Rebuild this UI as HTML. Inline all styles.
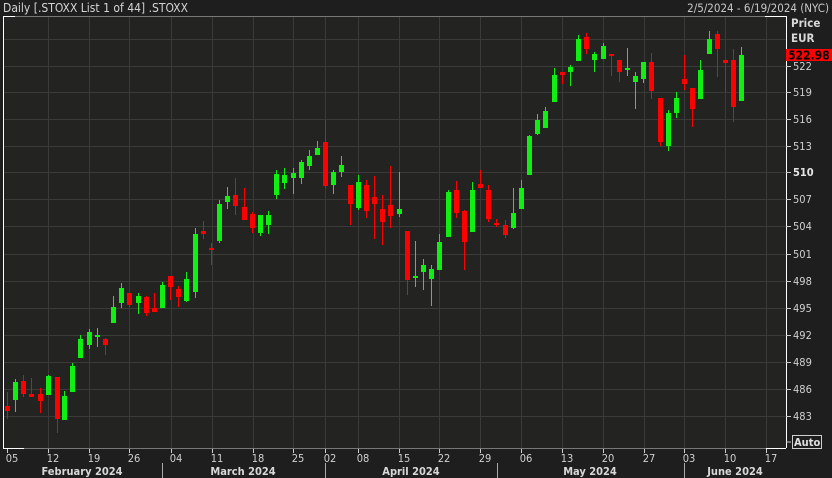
<!DOCTYPE html>
<html><head><meta charset="utf-8"><style>
html,body{margin:0;padding:0;background:#1e1e1e;width:832px;height:478px;overflow:hidden}
svg{display:block}
text{font-family:"DejaVu Sans Condensed","Liberation Sans",sans-serif}
</style></head><body>
<svg id="s" width="832" height="478" xmlns="http://www.w3.org/2000/svg">
<rect x="0" y="0" width="832" height="478" fill="#1e1e1e"/>
<rect x="3" y="16" width="783" height="432" fill="#232422"/>
<g id="grid" stroke="#3a3b39" stroke-width="1"></g>
<g id="c"></g>
<line x1="3.5" y1="16" x2="3.5" y2="448" stroke="#fff"/>
<line x1="786.5" y1="16" x2="786.5" y2="448" stroke="#fff"/>
<line x1="3" y1="16.5" x2="786" y2="16.5" stroke="#777"/>
<line x1="3" y1="16.5" x2="15" y2="16.5" stroke="#fff"/>
<line x1="765" y1="16.5" x2="786" y2="16.5" stroke="#fff"/>
<line x1="3" y1="448.5" x2="786" y2="448.5" stroke="#777"/>
<line x1="3" y1="448.5" x2="24" y2="448.5" stroke="#fff"/>
<line x1="766" y1="448.5" x2="786" y2="448.5" stroke="#fff"/>
<g id="ax" fill="#d0d0d0" font-size="11"></g>
<text x="3" y="12" fill="#d4d4d4" font-size="12">Daily [.STOXX List 1 of 44] .STOXX</text>
<text x="829" y="12" fill="#c8c8c8" font-size="11.5" text-anchor="end">2/5/2024 - 6/19/2024 (NYC)</text>
<text x="791" y="27" fill="#d8d8d8" font-size="11.5" font-weight="bold">Price</text>
<text x="791" y="42" fill="#d8d8d8" font-size="11.5" font-weight="bold">EUR</text>
<rect x="786" y="49" width="46" height="12" fill="#ff0000"/>
<text x="788" y="59.5" fill="#000" font-size="12" font-weight="bold">522.98</text>
<rect x="792.5" y="435.5" width="29" height="13" fill="none" stroke="#cfcfcf"/>
<text x="794" y="446" fill="#e0e0e0" font-size="11" font-weight="bold">Auto</text>
<line x1="786" y1="442" x2="791" y2="442" stroke="#ccc"/>
</svg>
<script>
var NS="http://www.w3.org/2000/svg";
function el(p,t,a,tx){var e=document.createElementNS(NS,t);for(var k in a)e.setAttribute(k,a[k]);if(tx)e.textContent=tx;p.appendChild(e);return e;}
var g=document.getElementById('grid'),ax=document.getElementById('ax'),c=document.getElementById('c');
var ys=[[39,''],[66,'522'],[92,'519'],[119,'516'],[146,'513'],[172,'510'],[199,'507'],[226,'504'],[254,'501'],[281,'498'],[308,'495'],[335,'492'],[362,'489'],[389,'486'],[416,'483']];
ys.forEach(function(v){el(g,'line',{x1:3,x2:786,y1:v[0]+.5,y2:v[0]+.5});if(v[1]){el(ax,'line',{x1:786,x2:791,y1:v[0]+.5,y2:v[0]+.5,stroke:'#ccc'});var t=el(ax,'text',{x:793,y:v[0]+4},v[1]);if(v[1]=='510'){t.setAttribute('font-weight','bold');t.setAttribute('fill','#e8e8e8');}}});
var xs=[[7,'05'],[48,'12'],[89,'19'],[129,'26'],[171,'04'],[212,'11'],[253,'18'],[293,'25'],[325,'02'],[358,'08'],[399,'15'],[439,'22'],[480,'29'],[521,'06'],[562,'13'],[603,'20'],[644,'27'],[684,'03'],[725,'10'],[766,'17']];
xs.forEach(function(v){if(v[0]>10)el(g,'line',{x1:v[0]+.5,x2:v[0]+.5,y1:17,y2:448});el(ax,'line',{x1:v[0]+.5,x2:v[0]+.5,y1:449,y2:453,stroke:'#ccc'});el(ax,'text',{x:v[0]+5,y:462,'text-anchor':'middle'},v[1]);});
[[162],[325],[497],[684]].forEach(function(v){el(ax,'line',{x1:v[0]+.5,x2:v[0]+.5,y1:463,y2:478,stroke:'#aaa'});});
[[82,'February 2024'],[243,'March 2024'],[411,'April 2024'],[590,'May 2024'],[735,'June 2024']].forEach(function(v){el(ax,'text',{x:v[0],y:475,'text-anchor':'middle','font-weight':'bold','fill':'#d8d8d8'},v[1]);});
// x, color, wickTop, bodyTop, bodyBot, wickBot
var d=[
[7,'r',392,406,411,419],[15,'g',379,382,400,412],[23,'r',375,381,394,397],[31,'r',378,394,397,397],[40,'r',388,394,401,413],[48,'g',375,376,395,395],[57,'r',377,377,419,433],[64,'g',391,396,420,420],[72,'g',363,366,392,392],[80,'g',335,339,358,358],
[89,'g',329,332,345,349],[97,'g',328,335,337,347],[105,'r',338,339,345,355],[113,'g',296,307,323,323],[121,'g',283,288,303,308],[129,'r',293,293,305,307],[138,'g',293,296,303,314],[146,'r',296,297,313,316],[154,'r',293,308,312,312],[162,'g',282,285,308,308],
[170,'r',276,276,287,300],[178,'r',286,289,297,307],[186,'g',272,279,301,302],[195,'g',228,234,292,298],[203,'r',221,231,234,239],[211,'r',243,248,250,265],[219,'g',200,204,241,243],[227,'g',187,196,202,209],[235,'r',178,195,206,215],[244,'r',188,207,220,220],
[252,'r',212,214,228,233],[260,'g',215,215,233,236],[268,'g',211,215,225,234],[276,'g',170,174,195,199],[284,'g',168,175,183,189],[293,'g',168,173,178,194],[301,'g',160,162,178,184],[309,'g',150,156,166,170],[317,'g',141,148,155,155],[325,'r',120,142,186,188],
[333,'g',170,172,185,194],[341,'g',156,165,172,177],[350,'r',185,185,204,225],[358,'g',175,182,208,210],[366,'r',180,185,211,218],[374,'r',176,197,204,239],[382,'r',195,209,222,245],[390,'r',166,205,216,228],[399,'g',172,209,214,217],[407,'r',231,231,280,295],
[415,'g',241,276,278,287],[423,'g',259,265,272,290],[431,'g',265,269,279,306],[439,'g',234,242,270,270],[448,'g',190,192,237,237],[456,'r',181,190,213,218],[464,'r',210,211,242,270],[472,'g',182,190,232,232],[480,'r',170,184,188,188],[488,'r',185,190,219,222],
[496,'r',219,223,225,227],[505,'r',220,225,235,238],[513,'g',188,213,228,229],[521,'g',180,188,209,209],[529,'g',135,136,175,175],[537,'g',114,120,134,135],[545,'g',107,111,128,128],[554,'g',68,75,102,102],[562,'r',72,72,75,84],[570,'g',65,67,72,86],
[578,'g',35,39,61,61],[586,'r',33,37,49,54],[594,'g',52,54,60,72],[603,'g',43,46,59,59],[611,'r',54,54,56,76],[619,'r',60,60,72,82],[627,'g',48,68,70,76],[635,'g',72,76,82,109],[643,'g',62,62,79,83],[651,'r',53,62,91,99],
[660,'r',98,98,142,146],[668,'g',110,113,146,151],[676,'g',92,98,113,118],[684,'r',55,79,84,90],[692,'r',88,88,109,127],[700,'g',60,70,99,99],[709,'g',31,39,54,54],[717,'r',31,34,49,77],[725,'r',60,60,63,92],[733,'r',49,60,107,122],[741,'g',47,55,101,101]
];
d.forEach(function(k){var col=k[1]=='g'?'#11ee11':'#ff0000';el(c,'rect',{x:k[0],y:k[2],width:1,height:Math.max(1,k[5]-k[2]),fill:col});var h=k[4]-k[3];el(c,'rect',{x:k[0]-2,y:k[3],width:5,height:Math.max(h,2),fill:col});});
</script>
</body></html>
